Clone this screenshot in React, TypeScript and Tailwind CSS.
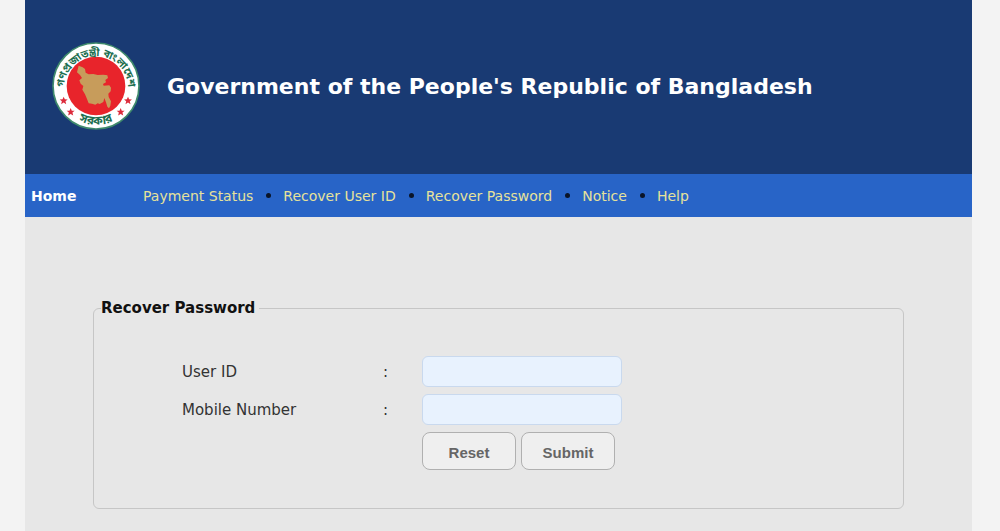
import type { InputHTMLAttributes } from "react";

const links = [
  "Payment Status",
  "Recover User ID",
  "Recover Password",
  "Notice",
  "Help",
];

const STAR = "M0 -12L3.4 -4L12 -3.6L5.4 1.8L7.6 10.4L0 5.8L-7.6 10.4L-5.4 1.8L-12 -3.6L-3.4 -4Z";

function Crest() {
  return (
    <svg
      viewBox="0 0 264 264"
      className="size-[88px] shrink-0"
      role="img"
      aria-label="Government seal"
    >
      <defs>
        <path id="top-arc" d="M36 138A96 96 0 1 1 228 138" />
        <path id="bottom-arc" d="M16 132A116 116 0 0 0 248 132" />
      </defs>
      <circle cx="132" cy="132" r="129" fill="#fff" stroke="#3f8a6c" strokeWidth="5" />
      <circle cx="132" cy="132" r="88" fill="#e8242b" />
      <path
        d="M80 71L92 76L99 81L101 92L110 97L124 96L137 99L154 98L166 100L168 108L160 114L162 121L153 126L155 131L172 130L177 137L176 148L169 155L170 165L177 178L175 191L171 199L166 194L162 181L157 168L154 180L143 186L137 184L130 188L120 185L110 184L105 171L99 157L91 143L94 132L86 125L82 115L90 108L84 99L75 91Z"
        fill="#c79c5b"
      />
      <g fill="#1d6f50" fontFamily="'Noto Sans Bengali', 'Noto Sans', sans-serif" fontWeight="700">
        <text fontSize="32" textAnchor="middle">
          <textPath href="#top-arc" startOffset="50%">
            গণপ্রজাতন্ত্রী বাংলাদেশ
          </textPath>
        </text>
        <text fontSize="36" textAnchor="middle">
          <textPath href="#bottom-arc" startOffset="50%">
            সরকার
          </textPath>
        </text>
      </g>
      <g fill="#dc2c3c">
        <path d={STAR} transform="translate(35 176)" />
        <path d={STAR} transform="translate(56 210)" />
        <path d={STAR} transform="translate(228 176)" />
        <path d={STAR} transform="translate(206 210)" />
      </g>
    </svg>
  );
}

interface FieldProps extends InputHTMLAttributes<HTMLInputElement> {
  id: string;
  label: string;
}

function Field({ id, label, ...props }: FieldProps) {
  return (
    <div className="flex items-center">
      <label htmlFor={id} className="w-[201px] pt-0.5">
        {label}
      </label>
      <span className="w-[39px] pt-0.5">:</span>
      <input
        id={id}
        name={id}
        className="h-[31px] w-[200px] rounded-md border border-[#c9d9ee] bg-[#e8f2fe] px-2"
        {...props}
      />
    </div>
  );
}

const buttonStyle =
  "h-[38px] w-[94px] rounded-lg border border-[#b0b0b0] bg-[#efefef] pt-1.5 font-['Liberation_Sans',sans-serif] text-[15px] font-bold text-[#666]";

export default function App() {
  return (
    <div className="min-h-screen bg-[#f3f3f3] pr-7 pl-[25px] font-[Verdana,'DejaVu_Sans',sans-serif]">
      <div className="min-h-screen bg-[#e7e7e7]">
        <header className="flex h-[174px] items-center gap-[27px] bg-[#193a73] pb-0.5 pl-[27px]">
          <Crest />
          <h1 className="text-[22px] font-bold text-white">
            Government of the People's Republic of Bangladesh
          </h1>
        </header>

        <nav className="flex h-[43px] items-center bg-[#2864c7] pl-1.5 text-sm">
          <a href="#" className="w-28 font-bold text-white">
            Home
          </a>
          <ul className="flex items-center">
            {links.map((link, i) => (
              <li key={link} className="flex items-center">
                {i > 0 && <span className="mr-3 ml-[13px] size-[5px] rounded-full bg-[#0a1428]" />}
                <a href="#" className="text-[#e6e29a]">
                  {link}
                </a>
              </li>
            ))}
          </ul>
        </nav>

        <main className="px-[68px] pt-20">
          <form>
            <fieldset className="rounded-md border border-[#c6c6c6] pb-[38px] pl-[7px]">
              <legend className="pr-1 text-[15px] font-bold text-[#111]">
                Recover Password
              </legend>
              <div className="flex flex-col gap-[7px] pt-9 pl-[81px] text-[15px] text-[#333]">
                <Field id="userId" label="User ID" type="text" />
                <Field id="mobile" label="Mobile Number" type="tel" />
                <div className="ml-60 flex gap-[5px]">
                  <button type="reset" className={buttonStyle}>
                    Reset
                  </button>
                  <button type="submit" className={buttonStyle}>
                    Submit
                  </button>
                </div>
              </div>
            </fieldset>
          </form>
        </main>
      </div>
    </div>
  );
}
